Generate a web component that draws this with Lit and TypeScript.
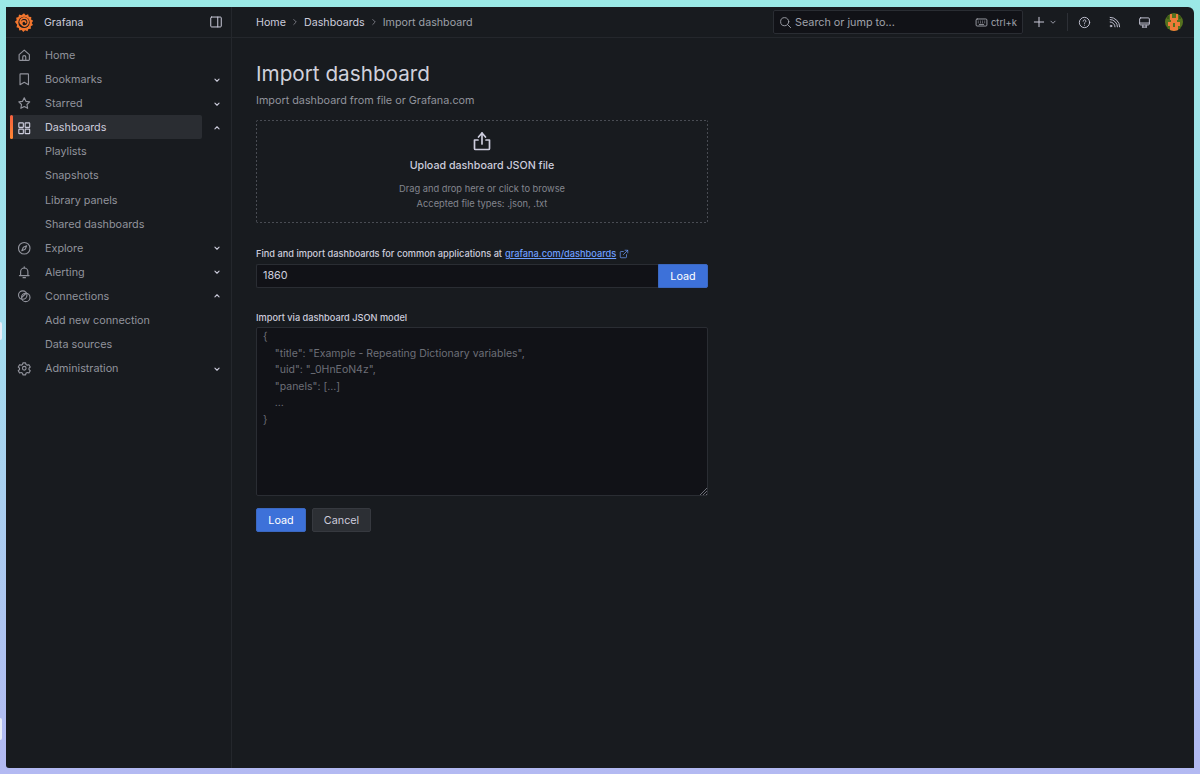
import { LitElement, css, html, svg } from 'lit';
import { customElement } from 'lit/decorators.js';

const icon = (body: unknown, size = 16, cls = '') => html`<svg class="icon ${cls}" width=${size} height=${size} viewBox="0 0 24 24" fill="none" stroke="currentColor" stroke-width="1.7" stroke-linecap="round" stroke-linejoin="round">${body}</svg>`;

const icons = {
	home: svg`<path d="M3.500 11 12 3.500l8.500 7.500v8a1.500 1.500 0 0 1-1.500 1.500H5A1.500 1.500 0 0 1 3.500 19z"/><path d="M9.500 20.500V15a2.500 2.500 0 0 1 5 0v5.500"/>`,
	bookmark: svg`<path d="M6 3h12a1 1 0 0 1 1 1v17l-7-4-7 4V4a1 1 0 0 1 1-1z"/>`,
	star: svg`<path d="m12 3 2.800 5.800 6.200.9-4.500 4.400 1.100 6.300L12 17.400l-5.600 3 1.100-6.300L3 9.700l6.200-.9z"/>`,
	apps: svg`<rect x="3" y="3" width="7.500" height="7.500" rx="1"/><rect x="13.500" y="3" width="7.500" height="7.500" rx="1"/><rect x="3" y="13.500" width="7.500" height="7.500" rx="1"/><rect x="13.500" y="13.500" width="7.500" height="7.500" rx="1"/>`,
	compass: svg`<circle cx="12" cy="12" r="9.500"/><path d="m16 8-2.500 5.500L8 16l2.500-5.500z"/>`,
	bell: svg`<path d="M6 17v-6a6 6 0 0 1 12 0v6"/><path d="M4 17.500h16"/><path d="M12 3v2"/><path d="M10 21h4"/>`,
	link: svg`<circle cx="9.500" cy="10" r="7"/><circle cx="14.500" cy="14" r="7"/><path d="m8 14 7-7"/>`,
	cog: svg`<circle cx="12" cy="12" r="3"/><path d="M9.800 3h4.400l.6 2.600 2.300 1.300 2.600-.8 2.200 3.800-2 1.800v2.600l2 1.800-2.200 3.800-2.600-.8-2.300 1.300-.6 2.600H9.800l-.6-2.600-2.300-1.300-2.600.8-2.200-3.800 2-1.800v-2.600l-2-1.800 2.200-3.800 2.600.8 2.300-1.300z"/>`,
	down: svg`<path d="m7 10 5 5 5-5"/>`,
	up: svg`<path d="m7 14 5-5 5 5"/>`,
	panel: svg`<rect x="3" y="3.500" width="18" height="17" rx="1.500"/><path d="M15 3.500v17"/>`,
	search: svg`<circle cx="10.500" cy="10.500" r="7.500"/><path d="m16 16 5.500 5.500"/>`,
	keyboard: svg`<rect x="2" y="5.500" width="20" height="13" rx="2"/><path d="M6 9.500h.01M10 9.500h.01M14 9.500h.01M18 9.500h.01M6 12.500h.01M10 12.500h.01M14 12.500h.01M18 12.500h.01M8 15.500h8"/>`,
	plus: svg`<path d="M12 4v16M4 12h16"/>`,
	help: svg`<circle cx="12" cy="12" r="9.500"/><path d="M9.500 9.500a2.500 2.500 0 1 1 3.800 2.100c-.9.600-1.300 1-1.300 2"/><path d="M12 17h.01"/>`,
	rss: svg`<path d="M4 11a9 9 0 0 1 9 9"/><path d="M4 6.500A13.500 13.500 0 0 1 17.500 20"/><path d="M4 2.500A17.500 17.500 0 0 1 21.500 20"/><circle cx="5.500" cy="18.500" r="1.500"/>`,
	monitor: svg`<rect x="3" y="3.500" width="18" height="13" rx="2"/><path d="M3 13h18"/><path d="M8 20.500h8M9 17v3.500M15 17v3.500"/>`,
	upload: svg`<path d="M8.500 8 12 4l3.500 4"/><path d="M12 4v11"/><path d="M8 11H4.500v8.500a1 1 0 0 0 1 1h13a1 1 0 0 0 1-1V11H16"/>`,
	external: svg`<path d="M18 13.500V19a2 2 0 0 1-2 2H5a2 2 0 0 1-2-2V8a2 2 0 0 1 2-2h5.500"/><path d="M14.500 3H21v6.500"/><path d="M10.500 13.500 21 3"/>`,
};

type NavItem = { label: string; icon?: unknown; caret?: 'up' | 'down'; active?: boolean };

const nav: NavItem[] = [
	{ label: 'Home', icon: icons.home },
	{ label: 'Bookmarks', icon: icons.bookmark, caret: 'down' },
	{ label: 'Starred', icon: icons.star, caret: 'down' },
	{ label: 'Dashboards', icon: icons.apps, caret: 'up', active: true },
	{ label: 'Playlists' },
	{ label: 'Snapshots' },
	{ label: 'Library panels' },
	{ label: 'Shared dashboards' },
	{ label: 'Explore', icon: icons.compass, caret: 'down' },
	{ label: 'Alerting', icon: icons.bell, caret: 'down' },
	{ label: 'Connections', icon: icons.link, caret: 'up' },
	{ label: 'Add new connection' },
	{ label: 'Data sources' },
	{ label: 'Administration', icon: icons.cog, caret: 'down' },
];

const placeholder = `{
    "title": "Example - Repeating Dictionary variables",
    "uid": "_0HnEoN4z",
    "panels": [...]
    ...
}`;

@customElement('app-root')
export class AppRoot extends LitElement {
	static styles = css`
		:host {
			display: block;
			height: 774px;
			box-sizing: border-box;
			padding: 7px 6px 6px;
			background: linear-gradient(180deg, #9be9e6 0%, #a5dcef 45%, #b3b9f2 100%);
			font-family: Inter, 'Liberation Sans', sans-serif;
			font-size: 10.8px;
			color: #ccccdc;
			overflow: hidden;
			position: relative;
		}

		.icon {
			display: block;
			flex: none;
		}

		.window {
			height: 100%;
			display: flex;
			flex-direction: column;
			background: #181b1f;
			border-radius: 0 6px 0 3px;
			overflow: hidden;
		}

		.topbar {
			flex: none;
			height: 30px;
			display: flex;
			border-bottom: 1px solid #24272c;
		}

		.brand {
			flex: none;
			box-sizing: border-box;
			width: 226px;
			display: flex;
			align-items: center;
			padding: 0 8px;
			border-right: 1px solid #24272c;
			font-size: 10.5px;
			color: #ccccdc;
		}

		.brand span {
			flex: 1;
			margin-left: 10px;
		}

		.crumbs {
			flex: 1;
			display: flex;
			align-items: center;
			padding-left: 24px;
			font-size: 10.7px;
			color: #ccccdc;
		}

		.crumbs .sep {
			margin: 0 4px;
			color: #9a9ba5;
		}

		.crumbs .last {
			color: #9da0a8;
		}

		.tools {
			display: flex;
			align-items: center;
			color: #ccccdc;
			padding-right: 11px;
		}

		.search {
			box-sizing: border-box;
			width: 250px;
			height: 24px;
			display: flex;
			align-items: center;
			gap: 3px;
			padding: 0 5px;
			background: #111217;
			border: 1px solid #2a2d33;
			border-radius: 2px;
			color: #a0a2ab;
			font-size: 10.8px;
		}

		.search .hint {
			margin-left: auto;
			display: flex;
			align-items: center;
			gap: 3px;
			font-size: 9.500px;
		}

		.plus {
			display: flex;
			align-items: center;
			margin-left: 9px;
			gap: 2px;
		}

		.divider {
			width: 1px;
			height: 18px;
			background: #2d3036;
			margin: 0 10px 0 9px;
		}

		.tool {
			margin-right: 17px;
		}

		.tool.last {
			margin-right: 14px;
		}

		.avatar {
			width: 18px;
			height: 18px;
			border-radius: 50%;
			flex: none;
			overflow: hidden;
			display: block;
		}

		.body {
			flex: 1;
			display: flex;
			min-height: 0;
		}

		.sidebar {
			flex: none;
			box-sizing: border-box;
			width: 226px;
			border-right: 1px solid #24272c;
			padding: 5.550px 0 0 4px;
		}

		.row {
			height: 24.080px;
			display: flex;
			align-items: center;
			color: #91939c;
		}

		.slot {
			width: 35px;
			padding-left: 7px;
			box-sizing: border-box;
			flex: none;
			color: #91939c;
		}

		.slot svg {
			stroke-width: 1.900;
		}

		.label {
			width: 157px;
		}

		.caret {
			margin-left: 10px;
			color: #ccccdc;
		}

		.caret svg {
			stroke-width: 2.600;
		}

		.row.active .inner {
			color: #ccccdc;
		}

		.row.active .slot {
			color: #ccccdc;
		}

		.inner {
			width: 192px;
			height: 24px;
			display: flex;
			align-items: center;
			flex: none;
			position: relative;
			z-index: 0;
		}

		.row.active .inner::after {
			content: '';
			position: absolute;
			inset: -1px 0 1px 0;
			border-radius: 2px;
			background: #2a2d32;
			z-index: -1;
		}

		.row.active .inner::before {
			content: '';
			position: absolute;
			left: 0;
			top: -1px;
			bottom: 1px;
			width: 3px;
			border-radius: 2px;
			background: linear-gradient(180deg, #f55f3e, #ff8833);
		}

		.main {
			flex: 1;
			padding: 24px 0 0 24px;
		}

		.content {
			width: 452px;
		}

		h1 {
			margin: 0;
			font-size: 20.700px;
			line-height: 24px;
			font-weight: 400;
			color: #d0d1dc;
		}

		.sub {
			margin-top: 6px;
			height: 18px;
			line-height: 18px;
			font-size: 10.8px;
			color: #91939c;
		}

		.drop {
			box-sizing: border-box;
			margin-top: 10px;
			height: 103px;
			border-radius: 2px;
			display: flex;
			flex-direction: column;
			align-items: center;
			padding-top: 9px;
			background-image: linear-gradient(90deg, #494c53 50%, transparent 0), linear-gradient(90deg, #494c53 50%, transparent 0),
				linear-gradient(#494c53 50%, transparent 0), linear-gradient(#494c53 50%, transparent 0);
			background-size: 4px 1px, 4px 1px, 1px 4px, 1px 4px;
			background-position: 0 0, 0 100%, 0 0, 100% 0;
			background-repeat: repeat-x, repeat-x, repeat-y, repeat-y;
		}

		.drop-title {
			margin-top: 5px;
			font-weight: 500;
			font-size: 10.7px;
			line-height: 16px;
			color: #ccccdc;
		}

		.drop-note {
			margin-top: 8px;
			font-size: 9.300px;
			line-height: 14.500px;
			text-align: center;
			color: #83858e;
		}

		.field-label {
			font-size: 9.230px;
			line-height: 14px;
			font-weight: 500;
			color: #ccccdc;
		}

		.find {
			margin-top: 24px;
			display: flex;
			align-items: center;
		}

		.find a {
			color: #6e9fff;
			text-decoration: underline;
			margin-left: 3px;
		}

		.find svg {
			margin-left: 3px;
			color: #6e9fff;
		}

		.input-row {
			margin-top: 3px;
			display: flex;
			height: 24px;
		}

		.input {
			flex: 1;
			box-sizing: border-box;
			background: #111217;
			border: 1px solid #2a2d33;
			border-right: none;
			border-radius: 2px 0 0 2px;
			padding-left: 6px;
			line-height: 22px;
			font-size: 10.8px;
			color: #ccccdc;
		}

		.btn {
			box-sizing: border-box;
			height: 24px;
			display: flex;
			align-items: center;
			justify-content: center;
			border-radius: 2px;
			font-size: 10.8px;
		}

		.primary {
			background: #3d71d9;
			color: #fff;
			border: 1px solid #3b68c0;
		}

		.input-row .primary {
			width: 50px;
			border-radius: 0 2px 2px 0;
		}

		.json-label {
			margin-top: 23px;
		}

		.json {
			box-sizing: border-box;
			margin-top: 2px;
			height: 169px;
			background: #111217;
			border: 1px solid #2a2d33;
			border-radius: 2px;
			padding: 1px 6px;
			font-size: 10.500px;
			line-height: 16.600px;
			color: #6d6f77;
			white-space: pre;
			position: relative;
		}

		.grip {
			position: absolute;
			right: 0;
			bottom: 0;
		}

		.actions {
			margin-top: 12px;
			display: flex;
			gap: 6px;
		}

		.actions .primary {
			width: 50px;
		}

		.secondary {
			width: 59px;
			background: #2c2f34;
			border: 1px solid #36393f;
			color: #ccccdc;
		}

		.edge {
			position: absolute;
			left: 0;
			width: 2px;
			background: #e9edf8;
			border-radius: 0 2px 2px 0;
		}
	`;

	render() {
		return html`
			<div class="window">
				<header class="topbar">
					<div class="brand">
						${this.renderLogo()}
						<span>Grafana</span>
						${icon(icons.panel, 14)}
					</div>
					<nav class="crumbs">
						Home
						<span class="sep">${icon(svg`<path d="m9 6 6 6-6 6"/>`, 10)}</span>
						Dashboards
						<span class="sep">${icon(svg`<path d="m9 6 6 6-6 6"/>`, 10)}</span>
						<span class="last">Import dashboard</span>
					</nav>
					<div class="tools">
						<div class="search">
							${icon(icons.search, 13)}
							Search or jump to...
							<span class="hint">${icon(icons.keyboard, 13)} ctrl+k</span>
						</div>
						<div class="plus">${icon(icons.plus, 14)} ${icon(icons.down, 10)}</div>
						<div class="divider"></div>
						<span class="tool">${icon(icons.help, 13)}</span>
						<span class="tool">${icon(icons.rss, 13)}</span>
						<span class="tool last">${icon(icons.monitor, 13)}</span>
						${this.renderAvatar()}
					</div>
				</header>
				<div class="body">
					<aside class="sidebar">
						${nav.map(
							(item) => html`
								<div class="row ${item.active ? 'active' : ''}">
									<div class="inner">
										<span class="slot">${item.icon ? icon(item.icon, 14.5) : ''}</span>
										<span class="label">${item.label}</span>
									</div>
									${item.caret ? html`<span class="caret">${icon(item.caret === 'up' ? icons.up : icons.down, 10)}</span>` : ''}
								</div>
							`,
						)}
					</aside>
					<main class="main">
						<div class="content">
							<h1>Import dashboard</h1>
							<div class="sub">Import dashboard from file or Grafana.com</div>
							<div class="drop">
								${icon(icons.upload, 24)}
								<div class="drop-title">Upload dashboard JSON file</div>
								<div class="drop-note">Drag and drop here or click to browse<br />Accepted file types: .json, .txt</div>
							</div>
							<div class="field-label find">
								Find and import dashboards for common applications at
								<a>grafana.com/dashboards</a>
								${icon(icons.external, 10)}
							</div>
							<div class="input-row">
								<div class="input">1860</div>
								<div class="btn primary">Load</div>
							</div>
							<div class="field-label json-label">Import via dashboard JSON model</div>
							<div class="json">${placeholder}<svg class="grip" width="8" height="8" viewBox="0 0 8 8" stroke="#6d6f77" stroke-width="1"><path d="M8 1 1 8M8 4 4 8M8 7 7 8"/></svg></div>
							<div class="actions">
								<div class="btn primary">Load</div>
								<div class="btn secondary">Cancel</div>
							</div>
						</div>
					</main>
				</div>
			</div>
			<div class="edge" style="top:322px;height:18px"></div>
			<div class="edge" style="top:718px;height:22px"></div>
		`;
	}

	renderLogo() {
		return html`<svg class="icon" width="20" height="20" viewBox="0 0 24 24" fill="none">
			<path fill="#f2762e" d="M12 1.500l2 2.300 2.900-1 .9 2.900 3 .2-.3 3 2.500 1.700-1.700 2.500 1.500 2.600-2.700 1.300.2 3-3 .3-1.100 2.800-2.800-1.100-2.300 2-1.900-2.400-2.900.6-.5-3-2.900-.9.9-2.900L1 11.800l2.300-2-.8-2.900 2.900-.8.600-3 2.900.7z"/>
			<circle cx="12" cy="12.500" r="6.800" fill="#181b1f"/>
			<path d="M8 14a4.700 4.700 0 0 1 4-7 5.500 5.500 0 0 1 5 4.500 5 5 0 0 1-4.500 5.500 3.300 3.300 0 0 1-3.300-3.500 2.800 2.800 0 0 1 2.800-2.800 2 2 0 0 1 2 2" stroke="#f2762e" stroke-width="2" stroke-linecap="round"/>
		</svg>`;
	}

	renderAvatar() {
		return html`<svg class="avatar" viewBox="0 0 18 18" shape-rendering="crispEdges">
			<rect width="18" height="18" fill="#55721f"/>
			<path fill="#ef7b38" d="M5 1h2v4h4V1h2v6h-1v2h3v4h-2v5H5v-5H3V9h3V7H5z"/>
			<path fill="#55721f" d="M8 10h2v4H8z"/>
			<path fill="#3c5a16" d="M2 3h2v3H2zM14 3h2v3h-2zM1 14h2v2H1zM15 14h2v2h-2z"/>
		</svg>`;
	}
}

declare global {
	interface HTMLElementTagNameMap {
		'app-root': AppRoot;
	}
}
